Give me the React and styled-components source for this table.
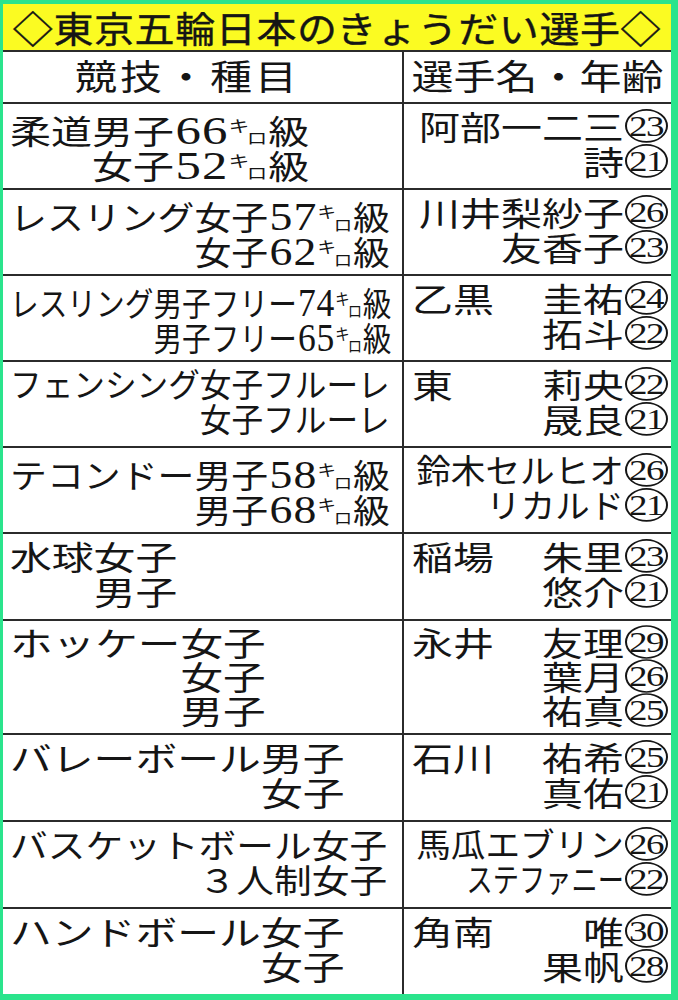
import React from "react";
import styled, { createGlobalStyle } from "styled-components";

const GREEN = "#2ae48c";
const YELLOW = "#fbfb22";
const RULE = "#2b2b2b";
const INK = "#151515";
const JP = `"Noto Sans CJK JP", "Noto Sans", sans-serif`;
const SERIF = `"Liberation Serif", "DejaVu Serif", serif`;
const BASE = 41;

const GlobalStyle = createGlobalStyle`
  html, body { margin: 0; padding: 0; background: ${GREEN}; }
  body { font-family: ${JP}; color: ${INK}; }
  *, *::before, *::after { box-sizing: border-box; }
`;

const Frame = styled.div`
  width: 678px;
  height: 1000px;
  padding: 4px 7px 6px 3px;
  background: ${GREEN};
`;

const Board = styled.div`
  height: 100%;
  background: #fff;
  display: flex;
  flex-direction: column;
  overflow: hidden;
`;

const Title = styled.h1`
  margin: 0;
  height: 48px;
  flex: none;
  background: ${YELLOW};
  border-bottom: 2px solid ${RULE};
  display: flex;
  align-items: center;
  justify-content: center;
  font-size: 40px;
  font-weight: 400;
  line-height: 44px;
  letter-spacing: 0.6px;
  white-space: nowrap;
`;

const TitleText = styled.span`
  display: inline-block;
  transform: scaleY(0.92);
  -webkit-text-stroke: 0.4px ${INK};
`;

const HeaderRow = styled.div`
  display: grid;
  grid-template-columns: 401px minmax(0, 1fr);
  height: 50px;
  flex: none;
`;

const HeaderCell = styled.div`
  display: flex;
  align-items: center;
  justify-content: center;
  font-size: 42px;
  line-height: 50px;
  white-space: nowrap;
  letter-spacing: ${(p) => p.$ls}px;
  padding-right: ${(p) => p.$shift}px;
  border-right: ${(p) => (p.$divider ? `2px solid ${RULE}` : "none")};
`;

const HeaderText = styled.span`
  display: inline-block;
  transform: translateY(-2px) scaleY(0.84);
`;

const Row = styled.div`
  display: grid;
  grid-template-columns: 401px minmax(0, 1fr);
  border-top: 2px solid ${RULE};
  flex: ${(p) => (p.$fill ? "1 1 auto" : "none")};
`;

const SportCell = styled.div`
  min-width: 0;
  display: flex;
  align-items: flex-start;
  border-right: 2px solid ${RULE};
  padding: 8px 0 ${(p) => p.$pb}px 7px;
`;

const SportBlock = styled.div`
  display: flex;
  flex-direction: column;
  align-items: flex-end;
`;

const SportLine = styled.div`
  height: ${(p) => p.$pitch}px;
  line-height: ${(p) => p.$pitch}px;
  font-size: ${(p) => BASE * p.$sx}px;
  white-space: nowrap;
  transform: translateY(-4px) scaleY(${(p) => 0.8 / p.$sx});
`;

const Num = styled.span`
  font-family: ${SERIF};
  font-size: 1.24em;
  letter-spacing: 0.02em;
  margin-left: 0.03em;
`;

const Kilo = styled.span`
  font-size: 0.5em;
  letter-spacing: -0.12em;
  margin: 0 0.16em 0 0.02em;
`;

const Ki = styled.span`
  vertical-align: 0.7em;
`;

const Ro = styled.span`
  vertical-align: -0.05em;
`;

const NameCell = styled.div`
  min-width: 0;
  display: flex;
  flex-direction: column;
  padding: 8px 3px ${(p) => p.$pb}px 11px;
`;

const NameLine = styled.div`
  display: flex;
  align-items: center;
  justify-content: space-between;
  height: ${(p) => p.$pitch}px;
  line-height: ${(p) => p.$pitch}px;
  font-size: ${BASE}px;
  white-space: nowrap;
  transform: translateY(-4px) scaleY(0.8);
`;

const Family = styled.span`
  display: inline-block;
  margin-left: -3px;
`;

const Given = styled.span`
  display: inline-flex;
  align-items: center;
  margin-left: auto;
`;

const Squeeze = styled.span`
  display: inline-block;
  font-size: ${(p) => BASE * p.$sx}px;
  transform: scaleY(${(p) => 1 / p.$sx});
`;

const Circled = styled.span`
  display: inline-flex;
  align-items: center;
  justify-content: center;
  width: 43px;
  height: 42px;
  margin-left: 1px;
  border: 2px solid ${INK};
  border-radius: 50%;
  font-family: ${SERIF};
  font-size: 37px;
  line-height: 1;
  letter-spacing: -1.5px;
  padding-right: 1px;
`;

const rows = [
  {
    lines: ["柔道男子66ｷﾛ級", "女子52ｷﾛ級"],
    sx: 1,
    names: [{ given: "阿部一二三", age: 23 }, { given: "詩", age: 21 }],
  },
  {
    lines: ["レスリング女子57ｷﾛ級", "女子62ｷﾛ級"],
    sx: 0.9,
    names: [{ given: "川井梨紗子", age: 26 }, { given: "友香子", age: 23 }],
  },
  {
    lines: ["レスリング男子フリー74ｷﾛ級", "男子フリー65ｷﾛ級"],
    sx: 0.7,
    names: [{ family: "乙黒", given: "圭祐", age: 24 }, { given: "拓斗", age: 22 }],
  },
  {
    lines: ["フェンシング女子フルーレ", "女子フルーレ"],
    sx: 0.772,
    names: [{ family: "東", given: "莉央", age: 22 }, { given: "晟良", age: 21 }],
  },
  {
    lines: ["テコンドー男子58ｷﾛ級", "男子68ｷﾛ級"],
    sx: 0.9,
    names: [
      { given: "鈴木セルヒオ", age: 26, sx: 0.845 },
      { given: "リカルド", age: 21, sx: 0.84 },
    ],
  },
  {
    lines: ["水球女子", "男子"],
    sx: 1.02,
    pb: 7,
    names: [{ family: "稲場", given: "朱里", age: 23 }, { given: "悠介", age: 21 }],
  },
  {
    lines: ["ホッケー女子", "女子", "男子"],
    sx: 1.04,
    pitch: 34,
    pb: 2,
    names: [
      { family: "永井", given: "友理", age: 29 },
      { given: "葉月", age: 26 },
      { given: "祐真", age: 25 },
    ],
  },
  {
    lines: ["バレーボール男子", "女子"],
    sx: 1.02,
    pb: 7,
    names: [{ family: "石川", given: "祐希", age: 25 }, { given: "真佑", age: 21 }],
  },
  {
    lines: ["バスケットボール女子", "３人制女子"],
    sx: 0.92,
    pb: 7,
    names: [
      { given: "馬瓜エブリン", age: 26, sx: 0.845 },
      { given: "ステファニー", age: 22, sx: 0.64 },
    ],
  },
  {
    lines: ["ハンドボール女子", "女子"],
    sx: 1.02,
    fill: true,
    names: [{ family: "角南", given: "唯", age: 30 }, { given: "果帆", age: 28 }],
  },
];

function SportText({ text }) {
  const parts = text.split(/(\d+|ｷﾛ)/).filter(Boolean);
  return parts.map((part, i) => {
    if (part === "ｷﾛ") {
      return (
        <Kilo key={i}>
          <Ki>キ</Ki>
          <Ro>ロ</Ro>
        </Kilo>
      );
    }
    if (/^\d+$/.test(part)) return <Num key={i}>{part}</Num>;
    return <React.Fragment key={i}>{part}</React.Fragment>;
  });
}

function NameEntry({ entry, pitch }) {
  return (
    <NameLine $pitch={pitch}>
      {entry.family ? <Family>{entry.family}</Family> : null}
      <Given>
        {entry.sx ? <Squeeze $sx={entry.sx}>{entry.given}</Squeeze> : entry.given}
        <Circled>{entry.age}</Circled>
      </Given>
    </NameLine>
  );
}

export default function App() {
  return (
    <>
      <GlobalStyle />
      <Frame>
        <Board>
          <Title>
            <TitleText>◇東京五輪日本のきょうだい選手◇</TitleText>
          </Title>
          <HeaderRow>
            <HeaderCell $divider $ls={3} $shift={30}>
              <HeaderText>競技・種目</HeaderText>
            </HeaderCell>
            <HeaderCell $ls={0} $shift={0}>
              <HeaderText>選手名・年齢</HeaderText>
            </HeaderCell>
          </HeaderRow>
          {rows.map((row, i) => {
            const pitch = row.pitch || 35;
            const pb = row.pb ?? 6;
            return (
              <Row key={i} $fill={row.fill}>
                <SportCell $pb={pb}>
                  <SportBlock>
                    {row.lines.map((line, j) => (
                      <SportLine key={j} $pitch={pitch} $sx={row.sx}>
                        <SportText text={line} />
                      </SportLine>
                    ))}
                  </SportBlock>
                </SportCell>
                <NameCell $pb={pb}>
                  {row.names.map((entry, j) => (
                    <NameEntry key={j} entry={entry} pitch={pitch} />
                  ))}
                </NameCell>
              </Row>
            );
          })}
        </Board>
      </Frame>
    </>
  );
}
